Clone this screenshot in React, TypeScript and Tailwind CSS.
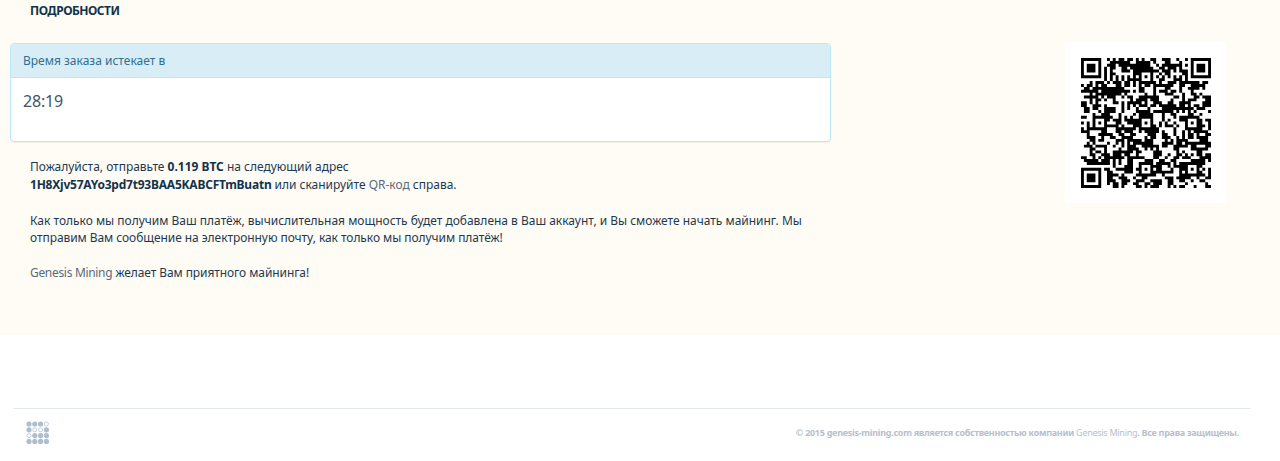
const N = 45;
function buildQr(): boolean[][] {
  const m: boolean[][] = Array.from({ length: N }, () => Array(N).fill(false));
  const fixed: boolean[][] = Array.from({ length: N }, () => Array(N).fill(false));
  const finder = (r0: number, c0: number) => {
    for (let r = -1; r <= 7; r++)
      for (let c = -1; c <= 7; c++) {
        const y = r0 + r, x = c0 + c;
        if (y < 0 || x < 0 || y >= N || x >= N) continue;
        fixed[y][x] = true;
        const edge = r === 0 || r === 6 || c === 0 || c === 6;
        const core = r >= 2 && r <= 4 && c >= 2 && c <= 4;
        m[y][x] = r >= 0 && r <= 6 && c >= 0 && c <= 6 && (edge || core);
      }
  };
  finder(0, 0);
  finder(0, N - 7);
  finder(N - 7, 0);
  for (let i = 0; i < N; i++) {
    if (!fixed[6][i]) { m[6][i] = i % 2 === 0; fixed[6][i] = true; }
    if (!fixed[i][6]) { m[i][6] = i % 2 === 0; fixed[i][6] = true; }
  }
  const centers = [6, 22, 38];
  for (const cy of centers)
    for (const cx of centers) {
      if ((cy === 6 && cx === 6) || (cy === 6 && cx === 38) || (cy === 38 && cx === 6)) continue;
      for (let r = -2; r <= 2; r++)
        for (let c = -2; c <= 2; c++) {
          fixed[cy + r][cx + c] = true;
          m[cy + r][cx + c] = Math.max(Math.abs(r), Math.abs(c)) !== 1;
        }
    }
  let s = 20150719;
  const rnd = () => {
    s = (Math.imul(s, 1664525) + 1013904223) >>> 0;
    return (s >>> 16) / 65536;
  };
  for (let r = 0; r < N; r++)
    for (let c = 0; c < N; c++) {
      if (fixed[r][c]) continue;
      const near = (r > 0 && m[r - 1][c] ? 0.12 : 0) + (c > 0 && m[r][c - 1] ? 0.12 : 0);
      m[r][c] = rnd() < 0.4 + near;
    }
  return m;
}

function QrCode() {
  const m = buildQr();
  let d = "";
  m.forEach((row, r) => row.forEach((on, c) => { if (on) d += `M${c} ${r}h1v1h-1z`; }));
  return (
    <svg width="130" height="130" viewBox="0 0 45 45" className="block" shapeRendering="auto">
      <path d={d} fill="#000" />
    </svg>
  );
}

function Logo() {
  const hollow = ["0-3", "1-1", "1-2", "2-0"];
  const xs = [3, 8.8, 14.6, 20.4];
  return (
    <svg width="24" height="24" viewBox="0 0 24 24" className="block">
      {xs.map((y, r) =>
        xs.map((x, c) =>
          hollow.includes(`${r}-${c}`) ? (
            <circle key={`${r}${c}`} cx={x} cy={y} r="2" fill="none" stroke="#b4c4d3" strokeWidth="0.8" />
          ) : (
            <circle key={`${r}${c}`} cx={x} cy={y} r="2.6" fill="#adbecd" />
          )
        )
      )}
    </svg>
  );
}

export default function App() {
  return (
    <div className="w-[1280px] h-[461px] bg-white overflow-hidden text-[#1c3a4f] font-['Noto_Sans',sans-serif]">
      <section className="h-[335px] bg-[#fffbf5] pl-[10px] flex items-start">
        <div className="w-[821px]">
          <h3 className="pl-5 pt-[2px] h-[43px] text-[12px] leading-[17px] font-bold tracking-[-0.5px] text-[#12334a]">ПОДРОБНОСТИ</h3>
          <div className="h-[99px] rounded-[4px] border border-[#bce8f1] bg-white overflow-hidden shadow-[0_1px_1px_rgba(0,0,0,0.05)]">
            <div className="h-[34px] bg-[#d9edf7] border-b border-[#bce8f1] px-3 flex items-center text-[12px] text-[#31708f]">
              Время заказа истекает в
            </div>
            <div className="px-3 pt-[12px] text-[16px] leading-[22px] tracking-[-0.2px] text-[#3e5569]">28:19</div>
          </div>
          <div className="pl-5 pt-4 text-[11.98px] leading-[17.5px] text-[#1c3a4f]">
            <p>
              Пожалуйста, отправьте <b className="text-[#12334a]">0.119 BTC</b> на следующий адрес
              <br />
              <b className="text-[#12334a] tracking-[-0.2px]">1H8Xjv57AYo3pd7t93BAA5KABCFTmBuatn</b> или сканируйте <span className="text-[#566b7c]">QR-код</span> справа.
            </p>
            <p className="mt-[18.5px]">
              Как только мы получим Ваш платёж, вычислительная мощность будет добавлена в Ваш аккаунт, и Вы сможете начать майнинг. Мы
              <br />
              <span className="tracking-[-0.05px]">отправим Вам сообщение на электронную почту, как только мы получим платёж!</span>
            </p>
            <p className="mt-[17.5px]">
              <span className="text-[#566b7c] tracking-[-0.3px]">Genesis Mining</span>{" "}
              <span className="tracking-[-0.07px]">желает Вам приятного майнинга!</span>
            </p>
          </div>
        </div>
        <div className="ml-[234px] mt-[42px] w-[161px] h-[161px] bg-white flex items-center justify-center">
          <QrCode />
        </div>
      </section>
      <footer className="mt-[73px] mx-[14px] w-[1236px] border-t border-[#e3e8e8] pt-[12px] pl-[12px] pr-[11px] flex items-center justify-between">
        <Logo />
        <p className="text-[9px] font-bold tracking-[-0.28px] text-[#b5c0ce]">
          © 2015 genesis-mining.com является собственностью компании <span className="font-normal">Genesis Mining</span>. Все права защищены.
        </p>
      </footer>
    </div>
  );
}
